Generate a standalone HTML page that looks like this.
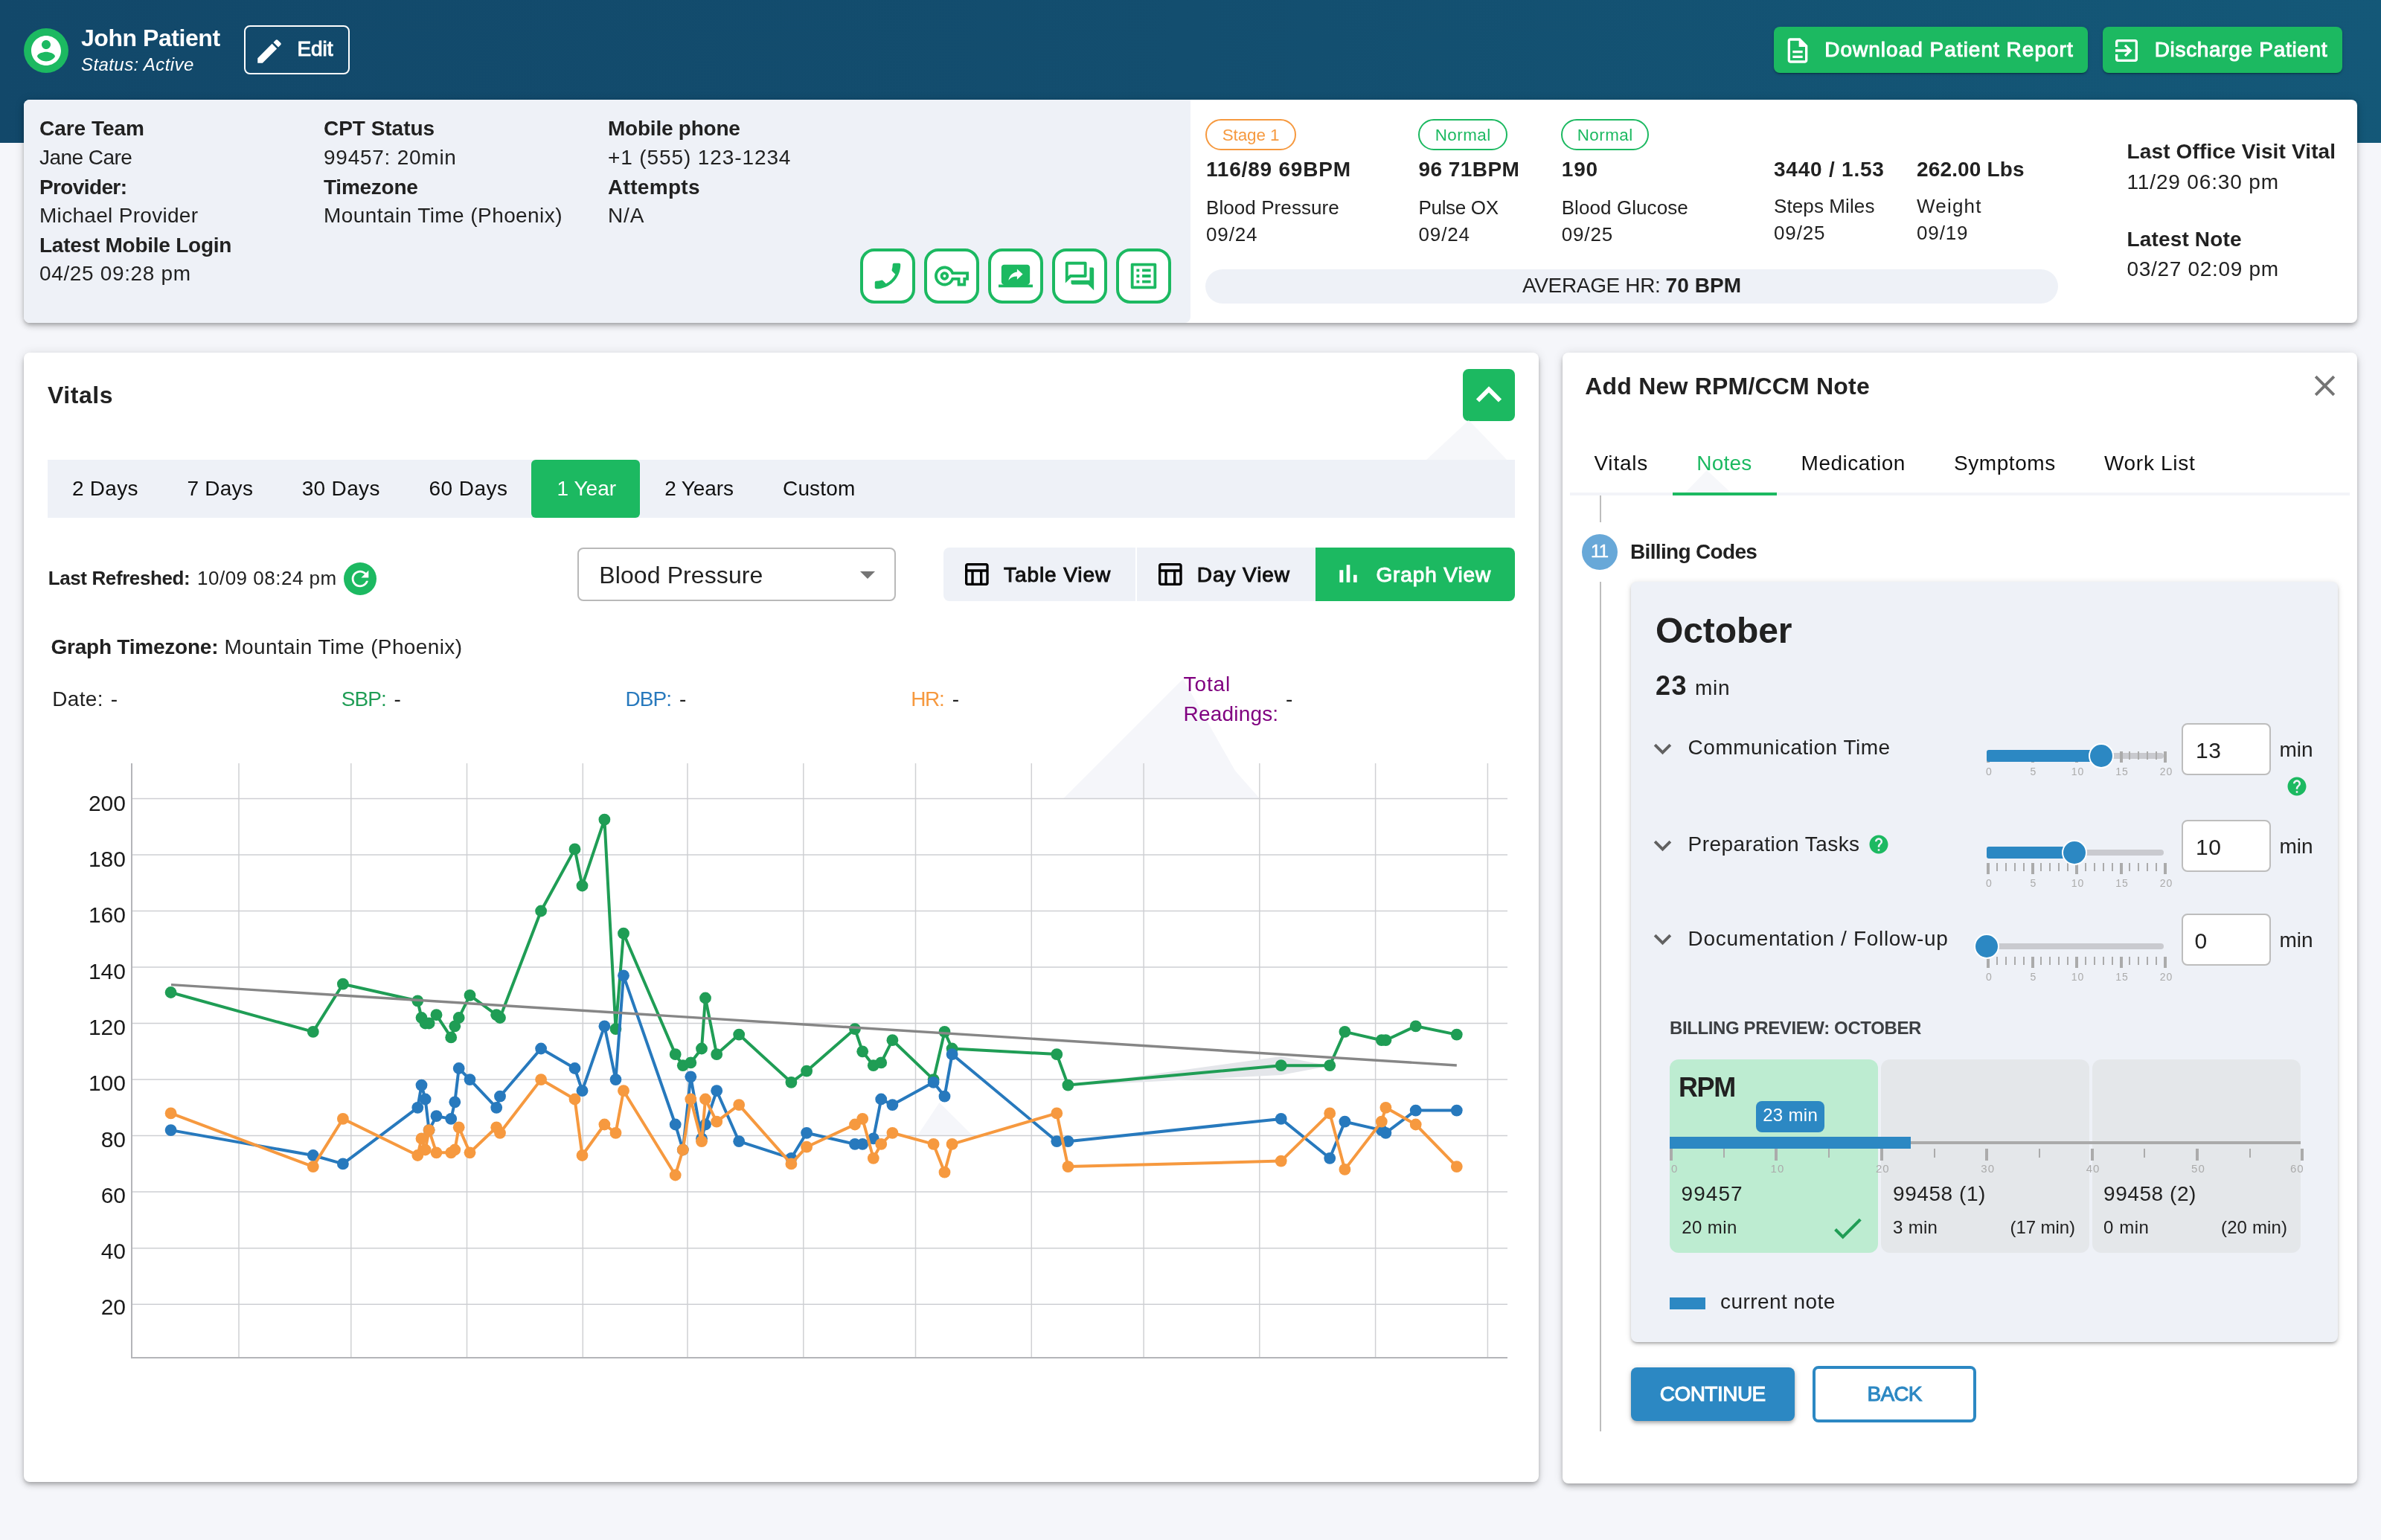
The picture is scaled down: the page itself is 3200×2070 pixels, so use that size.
<!DOCTYPE html>
<html lang="en"><head><meta charset="utf-8"><title>Patient - John Patient</title>
<style>
*{box-sizing:border-box;margin:0;padding:0}
html,body{width:3200px;height:2070px;overflow:hidden}
@media (max-width:1700px){html{zoom:.5}}
body{will-change:transform;background:#f5f6fa;font-family:"Liberation Sans",sans-serif;color:#212121;position:relative}
.t{position:absolute;white-space:nowrap;line-height:1;display:block}
.ic{position:absolute;display:block}
.abs{position:absolute}
.topbar{position:absolute;left:0;top:0;width:3200px;height:192px;background:linear-gradient(90deg,#12486a 0%,#134e6f 50%,#145878 100%)}
.card{position:absolute;background:#fff;border-radius:8px;box-shadow:0 3px 5px -1px rgba(0,0,0,.2),0 5px 8px 0 rgba(0,0,0,.14),0 1px 14px 0 rgba(0,0,0,.12)}
.btn-g{position:absolute;background:#1cb961;border-radius:8px;box-shadow:0 3px 1px -2px rgba(0,0,0,.2),0 2px 2px 0 rgba(0,0,0,.14),0 1px 5px 0 rgba(0,0,0,.12)}
.sq{position:absolute;width:74px;height:74px;border:4px solid #1cb961;border-radius:19px;background:#fff}
.badge{position:absolute;height:42px;border:2px solid;border-radius:21px}

.tabbar{position:absolute;background:#eef1f7}
.seg{position:absolute;top:262px;height:72px;background:#eef1f7}

.inp{position:absolute;width:120px;height:70px;border:2px solid #bdbdbd;border-radius:8px;background:#fff}
.thumb{position:absolute;width:34px;height:34px;border-radius:50%;background:#2c88c3;border:2px solid #fff}
.tk{position:absolute;background:#ababab}
.cpt{position:absolute;top:950px;width:280px;height:260px;border-radius:12px;background:#e4e7ea}
</style></head>
<body>
<header class="topbar">
<div style="position:absolute;left:32.0px;top:38.0px;width:60.0px;height:60.0px;background:#1cb961;border-radius:50%"></div>
<svg class="ic" style="left:38.0px;top:44.0px" width="48" height="48" viewBox="0 0 24 24"><path fill="#fff" d="M12 2C6.48 2 2 6.48 2 12s4.48 10 10 10 10-4.48 10-10S17.52 2 12 2zm0 3c1.66 0 3 1.34 3 3s-1.34 3-3 3-3-1.34-3-3 1.34-3 3-3zm0 14.2c-2.5 0-4.71-1.28-6-3.22.03-1.99 4-3.08 6-3.08 1.99 0 5.97 1.09 6 3.08-1.29 1.94-3.5 3.22-6 3.22z"/></svg>
<h1 class="t" style="left:109.0px;top:35.3px;font-size:32px;letter-spacing:-0.45px;font-weight:700;color:#fff;">John Patient</h1>
<span class="t" style="left:109.0px;top:75.4px;font-size:24px;letter-spacing:0.42px;color:#fff;font-style:italic;">Status: Active</span>
<a style="position:absolute;left:328.0px;top:34.0px;width:142.0px;height:66.0px;border:2px solid #fff;border-radius:8px"></a>
<svg class="ic" style="left:341.0px;top:47.7px" width="42" height="42" viewBox="0 0 24 24"><path fill="#fff" d="M3 17.25V21h3.75L17.81 9.94l-3.75-3.75L3 17.25zM20.71 7.04c.39-.39.39-1.02 0-1.41l-2.34-2.34c-.39-.39-1.02-.39-1.41 0l-1.83 1.83 3.75 3.75 1.83-1.83z"/></svg>
<span class="t" style="left:399.5px;top:52.3px;font-size:28px;letter-spacing:-0.08px;color:#fff;-webkit-text-stroke:1.0px currentColor;">Edit</span>
<div class="btn-g" style="position:absolute;left:2384.0px;top:36.0px;width:422.0px;height:62.0px;"></div>
<svg class="ic" style="left:2396.0px;top:48.0px" width="40" height="40" viewBox="0 0 24 24"><path fill="#fff" d="M8 16h8v2H8zm0-4h8v2H8zm6-10H6c-1.1 0-2 .9-2 2v16c0 1.1.89 2 1.99 2H18c1.1 0 2-.9 2-2V8l-6-6zm4 18H6V4h7v5h5v11z"/></svg>
<span class="t" style="left:2452.2px;top:52.7px;font-size:28px;letter-spacing:1.01px;color:#fff;-webkit-text-stroke:1.0px currentColor;">Download Patient Report</span>
<div class="btn-g" style="position:absolute;left:2826.0px;top:36.0px;width:322.0px;height:62.0px;"></div>
<svg class="ic" style="left:2837.6px;top:48.2px" width="40" height="40" viewBox="0 0 24 24"><path fill="#fff" d="M10.09 15.59L11.5 17l5-5-5-5-1.41 1.41L12.67 11H3v2h9.67l-2.58 2.59zM19 3H5c-1.11 0-2 .9-2 2v4h2V5h14v14H5v-4H3v4c0 1.1.89 2 2 2h14c1.1 0 2-.9 2-2V5c0-1.1-.9-2-2-2z"/></svg>
<span class="t" style="left:2895.7px;top:52.7px;font-size:28px;letter-spacing:0.68px;color:#fff;-webkit-text-stroke:1.0px currentColor;">Discharge Patient</span>
</header>
<section class="card" style="left:32px;top:134px;width:3136px;height:300px">
<div class="abs" style="left:0;top:0;width:1568px;height:300px;background:#eef1f7;border-radius:8px 0 8px 8px"></div>
<span class="t" style="left:21.0px;top:24.6px;font-size:28px;letter-spacing:-0.03px;font-weight:700;">Care Team</span>
<span class="t" style="left:21.0px;top:64.3px;font-size:28px;letter-spacing:-0.53px;">Jane Care</span>
<span class="t" style="left:21.0px;top:104.3px;font-size:28px;letter-spacing:-0.62px;font-weight:700;">Provider:</span>
<span class="t" style="left:21.0px;top:142.0px;font-size:28px;letter-spacing:0.30px;">Michael Provider</span>
<span class="t" style="left:21.0px;top:182.3px;font-size:28px;letter-spacing:-0.25px;font-weight:700;">Latest Mobile Login</span>
<span class="t" style="left:21.0px;top:220.0px;font-size:28px;letter-spacing:0.65px;">04/25 09:28 pm</span>
<span class="t" style="left:403.0px;top:24.6px;font-size:28px;letter-spacing:-0.03px;font-weight:700;">CPT Status</span>
<span class="t" style="left:403.0px;top:64.3px;font-size:28px;letter-spacing:0.75px;">99457: 20min</span>
<span class="t" style="left:403.0px;top:104.3px;font-size:28px;letter-spacing:-0.25px;font-weight:700;">Timezone</span>
<span class="t" style="left:403.0px;top:142.0px;font-size:28px;letter-spacing:0.42px;">Mountain Time (Phoenix)</span>
<span class="t" style="left:785.0px;top:24.6px;font-size:28px;letter-spacing:-0.23px;font-weight:700;">Mobile phone</span>
<span class="t" style="left:785.0px;top:64.3px;font-size:28px;letter-spacing:0.89px;">+1 (555) 123-1234</span>
<span class="t" style="left:785.0px;top:104.3px;font-size:28px;letter-spacing:0.32px;font-weight:700;">Attempts</span>
<span class="t" style="left:785.0px;top:142.0px;font-size:28px;letter-spacing:0.88px;">N/A</span>
<a class="sq" style="left:1124px;top:200px"></a>
<a class="sq" style="left:1210px;top:200px"></a>
<a class="sq" style="left:1296px;top:200px"></a>
<a class="sq" style="left:1382px;top:200px"></a>
<a class="sq" style="left:1468px;top:200px"></a>
<svg class="ic" style="left:1138.0px;top:214.0px" width="46" height="46" viewBox="0 0 24 24"><path fill="#1cb961" d="M6.62 10.79c1.44 2.83 3.76 5.14 6.59 6.59l2.2-2.2c.27-.27.67-.36 1.02-.24 1.12.37 2.33.57 3.57.57.55 0 1 .45 1 1V20c0 .55-.45 1-1 1-9.39 0-17-7.61-17-17 0-.55.45-1 1-1h3.5c.55 0 1 .45 1 1 0 1.25.2 2.45.57 3.57.11.35.03.74-.25 1.02l-2.2 2.2z" transform="translate(24 0) scale(-1 1)"/></svg>
<svg class="ic" style="left:1224.0px;top:214.0px" width="46" height="46" viewBox="0 0 24 24"><path fill="#1cb961" d="M22 19h-6v-4h-2.68c-1.14 2.42-3.6 4-6.32 4-3.86 0-7-3.14-7-7s3.14-7 7-7c2.72 0 5.17 1.58 6.32 4H24v6h-2v4zm-4-2h2v-4h2v-2H11.94l-.23-.67C11.01 8.34 9.11 7 7 7c-2.76 0-5 2.24-5 5s2.24 5 5 5c2.11 0 4.01-1.34 4.71-3.33l.23-.67H18v4zM7 15c-1.65 0-3-1.35-3-3s1.35-3 3-3 3 1.35 3 3-1.35 3-3 3zm0-4c-.55 0-1 .45-1 1s.45 1 1 1 1-.45 1-1-.45-1-1-1z"/></svg>
<svg class="ic" style="left:1310.0px;top:214.0px" width="46" height="46" viewBox="0 0 24 24"><path fill="#1cb961" d="M20 18c1.1 0 1.99-.9 1.99-2L22 6c0-1.11-.9-2-2-2H4c-1.11 0-2 .89-2 2v10c0 1.1.89 2 2 2H0v2h24v-2h-4zm-7-3.53v-2.19c-2.78 0-4.61.85-6 2.72.56-2.67 2.11-5.33 6-5.87V7l4 3.73-4 3.74z"/></svg>
<svg class="ic" style="left:1396.0px;top:214.0px" width="46" height="46" viewBox="0 0 24 24"><path fill="#1cb961" d="M15 4v7H5.17L4 12.17V4h11m1-2H3c-.55 0-1 .45-1 1v14l4-4h10c.55 0 1-.45 1-1V3c0-.55-.45-1-1-1zm5 4h-2v9H6v2c0 .55.45 1 1 1h11l4 4V7c0-.55-.45-1-1-1z"/></svg>
<svg class="ic" style="left:1482.0px;top:214.0px" width="46" height="46" viewBox="0 0 24 24"><path fill="#1cb961" d="M19 5v14H5V5h14m1.1-2H3.9c-.5 0-.9.4-.9.9v16.2c0 .4.4.9.9.9h16.2c.4 0 .9-.5.9-.9V3.9c0-.5-.5-.9-.9-.9zM11 7h6v2h-6V7zm0 4h6v2h-6v-2zm0 4h6v2h-6zM7 7h2v2H7zm0 4h2v2H7zm0 4h2v2H7z"/></svg>
<span class="badge" style="left:1588px;top:26px;width:122px;border-color:#f6993f"></span>
<span class="t" style="left:1610.7px;top:36.5px;font-size:22.4px;letter-spacing:-0.09px;color:#f6993f;">Stage 1</span>
<span class="badge" style="left:1874px;top:26px;width:120px;border-color:#1cb961"></span>
<span class="t" style="left:1896.7px;top:36.5px;font-size:22.4px;letter-spacing:0.48px;color:#1cb961;">Normal</span>
<span class="badge" style="left:2066px;top:26px;width:118px;border-color:#1cb961"></span>
<span class="t" style="left:2087.7px;top:36.5px;font-size:22.4px;letter-spacing:0.48px;color:#1cb961;">Normal</span>
<span class="t" style="left:1589.0px;top:80.3px;font-size:28px;letter-spacing:0.80px;font-weight:700;">116/89 69BPM</span>
<span class="t" style="left:1589.0px;top:132.0px;font-size:26px;letter-spacing:0.08px;">Blood Pressure</span>
<span class="t" style="left:1589.0px;top:168.0px;font-size:26px;letter-spacing:0.88px;">09/24</span>
<span class="t" style="left:1874.5px;top:80.3px;font-size:28px;letter-spacing:0.45px;font-weight:700;">96 71BPM</span>
<span class="t" style="left:1874.5px;top:132.0px;font-size:26px;letter-spacing:-0.32px;">Pulse OX</span>
<span class="t" style="left:1874.5px;top:168.0px;font-size:26px;letter-spacing:0.88px;">09/24</span>
<span class="t" style="left:2066.7px;top:80.3px;font-size:28px;letter-spacing:0.88px;font-weight:700;">190</span>
<span class="t" style="left:2066.7px;top:132.0px;font-size:26px;letter-spacing:0.08px;">Blood Glucose</span>
<span class="t" style="left:2066.7px;top:168.0px;font-size:26px;letter-spacing:0.88px;">09/25</span>
<span class="t" style="left:2352.0px;top:80.3px;font-size:28px;letter-spacing:0.78px;font-weight:700;">3440 / 1.53</span>
<span class="t" style="left:2352.0px;top:129.7px;font-size:26px;letter-spacing:0.10px;">Steps Miles</span>
<span class="t" style="left:2352.0px;top:165.7px;font-size:26px;letter-spacing:0.88px;">09/25</span>
<span class="t" style="left:2544.0px;top:80.3px;font-size:28px;letter-spacing:0.15px;font-weight:700;">262.00 Lbs</span>
<span class="t" style="left:2544.0px;top:129.7px;font-size:26px;letter-spacing:1.20px;">Weight</span>
<span class="t" style="left:2544.0px;top:165.7px;font-size:26px;letter-spacing:0.88px;">09/19</span>
<div style="position:absolute;left:1588.0px;top:228.0px;width:1146.0px;height:46.0px;background:#eef1f7;border-radius:23px"></div>
<span class="t" style="left:2014.0px;top:236.3px;font-size:28px;letter-spacing:-0.34px;">AVERAGE HR:</span>
<span class="t" style="left:2206.5px;top:236.3px;font-size:28px;letter-spacing:0.11px;font-weight:700;">70 BPM</span>
<span class="t" style="left:2826.5px;top:56.3px;font-size:28px;letter-spacing:0.14px;font-weight:700;">Last Office Visit Vital</span>
<span class="t" style="left:2826.5px;top:96.5px;font-size:28px;letter-spacing:0.85px;">11/29 06:30 pm</span>
<span class="t" style="left:2826.5px;top:174.3px;font-size:28px;letter-spacing:0.15px;font-weight:700;">Latest Note</span>
<span class="t" style="left:2826.5px;top:214.3px;font-size:28px;letter-spacing:0.70px;">03/27 02:09 pm</span>
</section>
<section class="card" style="left:32px;top:474px;width:2036px;height:1518px">
<svg class="ic" style="left:0;top:0" width="2036" height="1519" viewBox="32 474 2036 1519" font-family="Liberation Sans, sans-serif">
<path d="M1429.5 1073L1590 912.6L1660 1036L1692.7 1073z" fill="#f5f6fa"/>
<path d="M1232.6 1527L1262.5 1482L1307.8 1527z" fill="#f5f6fa"/>
<path d="M321.0 1026V1825 M471.8 1026V1825 M627.5 1026V1825 M783.3 1026V1825 M924.0 1026V1825 M1079.8 1026V1825 M1230.5 1026V1825 M1386.3 1026V1825 M1537.1 1026V1825 M1692.8 1026V1825 M1848.6 1026V1825 M1999.4 1026V1825" stroke="#d0d1d4" stroke-width="1.5" fill="none"/>
<path d="M177 1753.2H2026 M177 1677.7H2026 M177 1602.1H2026 M177 1526.6H2026 M177 1451.1H2026 M177 1375.5H2026 M177 1300.0H2026 M177 1224.5H2026 M177 1148.9H2026 M177 1073.4H2026" stroke="#cecfd3" stroke-width="1.5" fill="none"/>
<path d="M177 1026V1825H2026" stroke="#b4b5b9" stroke-width="2" fill="none"/>
<text x="169" y="1089.6" font-size="30" text-anchor="end" fill="#1a1a1a">200</text>
<text x="169" y="1164.9" font-size="30" text-anchor="end" fill="#1a1a1a">180</text>
<text x="169" y="1240.2" font-size="30" text-anchor="end" fill="#1a1a1a">160</text>
<text x="169" y="1315.5" font-size="30" text-anchor="end" fill="#1a1a1a">140</text>
<text x="169" y="1390.8" font-size="30" text-anchor="end" fill="#1a1a1a">120</text>
<text x="169" y="1466.2" font-size="30" text-anchor="end" fill="#1a1a1a">100</text>
<text x="169" y="1541.5" font-size="30" text-anchor="end" fill="#1a1a1a">80</text>
<text x="169" y="1616.8" font-size="30" text-anchor="end" fill="#1a1a1a">60</text>
<text x="169" y="1692.1" font-size="30" text-anchor="end" fill="#1a1a1a">40</text>
<text x="169" y="1767.4" font-size="30" text-anchor="end" fill="#1a1a1a">20</text>
<path d="M1435.4 1459.4L1721.7 1420L1787.2 1432.7L1721.7 1445z" fill="#e4e6ea"/>
<g fill="#1f9d55"><path d="M229.6 1334.0 L420.8 1386.9 L460.9 1322.7 L561.3 1345.3 L566.5 1368.0 L571.6 1375.5 L576.6 1375.5 L586.5 1364.2 L606.2 1394.4 L611.3 1379.3 L616.7 1368.0 L631.5 1337.8 L667.2 1364.2 L672.0 1368.0 L727.1 1224.5 L772.5 1141.4 L782.5 1190.5 L812.4 1101.7 L827.5 1383.1 L838.0 1254.7 L907.7 1417.1 L917.8 1432.2 L928.3 1428.4 L943.0 1409.5 L948.0 1341.5 L963.2 1417.1 L993.2 1390.6 L1063.4 1454.8 L1084.1 1439.7 L1149.0 1383.1 L1159.2 1413.3 L1173.8 1432.2 L1184.2 1428.4 L1199.4 1398.2 L1254.6 1451.1 L1269.5 1386.9 L1279.6 1409.5 L1420.3 1417.1 L1435.4 1458.6 L1721.7 1432.2 L1787.2 1432.2 L1807.4 1386.9 L1856.8 1398.2 L1862.4 1398.2 L1902.7 1379.3 L1957.8 1390.6" fill="none" stroke="#1f9d55" stroke-width="4" stroke-linejoin="round"/><circle cx="229.6" cy="1334.0" r="7.9"/><circle cx="420.8" cy="1386.9" r="7.9"/><circle cx="460.9" cy="1322.7" r="7.9"/><circle cx="561.3" cy="1345.3" r="7.9"/><circle cx="566.5" cy="1368.0" r="7.9"/><circle cx="571.6" cy="1375.5" r="7.9"/><circle cx="576.6" cy="1375.5" r="7.9"/><circle cx="586.5" cy="1364.2" r="7.9"/><circle cx="606.2" cy="1394.4" r="7.9"/><circle cx="611.3" cy="1379.3" r="7.9"/><circle cx="616.7" cy="1368.0" r="7.9"/><circle cx="631.5" cy="1337.8" r="7.9"/><circle cx="667.2" cy="1364.2" r="7.9"/><circle cx="672.0" cy="1368.0" r="7.9"/><circle cx="727.1" cy="1224.5" r="7.9"/><circle cx="772.5" cy="1141.4" r="7.9"/><circle cx="782.5" cy="1190.5" r="7.9"/><circle cx="812.4" cy="1101.7" r="7.9"/><circle cx="827.5" cy="1383.1" r="7.9"/><circle cx="838.0" cy="1254.7" r="7.9"/><circle cx="907.7" cy="1417.1" r="7.9"/><circle cx="917.8" cy="1432.2" r="7.9"/><circle cx="928.3" cy="1428.4" r="7.9"/><circle cx="943.0" cy="1409.5" r="7.9"/><circle cx="948.0" cy="1341.5" r="7.9"/><circle cx="963.2" cy="1417.1" r="7.9"/><circle cx="993.2" cy="1390.6" r="7.9"/><circle cx="1063.4" cy="1454.8" r="7.9"/><circle cx="1084.1" cy="1439.7" r="7.9"/><circle cx="1149.0" cy="1383.1" r="7.9"/><circle cx="1159.2" cy="1413.3" r="7.9"/><circle cx="1173.8" cy="1432.2" r="7.9"/><circle cx="1184.2" cy="1428.4" r="7.9"/><circle cx="1199.4" cy="1398.2" r="7.9"/><circle cx="1254.6" cy="1451.1" r="7.9"/><circle cx="1269.5" cy="1386.9" r="7.9"/><circle cx="1279.6" cy="1409.5" r="7.9"/><circle cx="1420.3" cy="1417.1" r="7.9"/><circle cx="1435.4" cy="1458.6" r="7.9"/><circle cx="1721.7" cy="1432.2" r="7.9"/><circle cx="1787.2" cy="1432.2" r="7.9"/><circle cx="1807.4" cy="1386.9" r="7.9"/><circle cx="1856.8" cy="1398.2" r="7.9"/><circle cx="1862.4" cy="1398.2" r="7.9"/><circle cx="1902.7" cy="1379.3" r="7.9"/><circle cx="1957.8" cy="1390.6" r="7.9"/></g>
<g fill="#2779bd"><path d="M229.6 1519.1 L420.8 1553.0 L460.9 1564.4 L561.3 1488.8 L566.5 1458.6 L571.6 1477.5 L576.6 1519.1 L586.5 1500.2 L606.2 1503.9 L611.3 1481.3 L616.7 1436.0 L631.5 1451.1 L667.2 1488.8 L672.0 1473.7 L727.1 1409.5 L772.5 1436.0 L782.5 1466.2 L812.4 1379.3 L827.5 1451.1 L838.0 1311.3 L907.7 1511.5 L917.8 1545.5 L928.3 1447.3 L943.0 1530.4 L948.0 1511.5 L963.2 1466.2 L993.2 1534.2 L1063.4 1556.8 L1084.1 1522.8 L1149.0 1537.9 L1159.2 1537.9 L1173.8 1530.4 L1184.2 1477.5 L1199.4 1485.1 L1254.6 1454.8 L1269.5 1473.7 L1279.6 1417.1 L1420.3 1534.2 L1435.4 1534.2 L1721.7 1503.9 L1787.2 1556.8 L1807.4 1507.7 L1856.8 1519.1 L1862.4 1522.8 L1902.7 1492.6 L1957.8 1492.6" fill="none" stroke="#2779bd" stroke-width="4" stroke-linejoin="round"/><circle cx="229.6" cy="1519.1" r="7.9"/><circle cx="420.8" cy="1553.0" r="7.9"/><circle cx="460.9" cy="1564.4" r="7.9"/><circle cx="561.3" cy="1488.8" r="7.9"/><circle cx="566.5" cy="1458.6" r="7.9"/><circle cx="571.6" cy="1477.5" r="7.9"/><circle cx="576.6" cy="1519.1" r="7.9"/><circle cx="586.5" cy="1500.2" r="7.9"/><circle cx="606.2" cy="1503.9" r="7.9"/><circle cx="611.3" cy="1481.3" r="7.9"/><circle cx="616.7" cy="1436.0" r="7.9"/><circle cx="631.5" cy="1451.1" r="7.9"/><circle cx="667.2" cy="1488.8" r="7.9"/><circle cx="672.0" cy="1473.7" r="7.9"/><circle cx="727.1" cy="1409.5" r="7.9"/><circle cx="772.5" cy="1436.0" r="7.9"/><circle cx="782.5" cy="1466.2" r="7.9"/><circle cx="812.4" cy="1379.3" r="7.9"/><circle cx="827.5" cy="1451.1" r="7.9"/><circle cx="838.0" cy="1311.3" r="7.9"/><circle cx="907.7" cy="1511.5" r="7.9"/><circle cx="917.8" cy="1545.5" r="7.9"/><circle cx="928.3" cy="1447.3" r="7.9"/><circle cx="943.0" cy="1530.4" r="7.9"/><circle cx="948.0" cy="1511.5" r="7.9"/><circle cx="963.2" cy="1466.2" r="7.9"/><circle cx="993.2" cy="1534.2" r="7.9"/><circle cx="1063.4" cy="1556.8" r="7.9"/><circle cx="1084.1" cy="1522.8" r="7.9"/><circle cx="1149.0" cy="1537.9" r="7.9"/><circle cx="1159.2" cy="1537.9" r="7.9"/><circle cx="1173.8" cy="1530.4" r="7.9"/><circle cx="1184.2" cy="1477.5" r="7.9"/><circle cx="1199.4" cy="1485.1" r="7.9"/><circle cx="1254.6" cy="1454.8" r="7.9"/><circle cx="1269.5" cy="1473.7" r="7.9"/><circle cx="1279.6" cy="1417.1" r="7.9"/><circle cx="1420.3" cy="1534.2" r="7.9"/><circle cx="1435.4" cy="1534.2" r="7.9"/><circle cx="1721.7" cy="1503.9" r="7.9"/><circle cx="1787.2" cy="1556.8" r="7.9"/><circle cx="1807.4" cy="1507.7" r="7.9"/><circle cx="1856.8" cy="1519.1" r="7.9"/><circle cx="1862.4" cy="1522.8" r="7.9"/><circle cx="1902.7" cy="1492.6" r="7.9"/><circle cx="1957.8" cy="1492.6" r="7.9"/></g>
<g fill="#f6993f"><path d="M229.6 1496.4 L420.8 1568.1 L460.9 1503.9 L561.3 1553.0 L566.5 1530.4 L571.6 1545.5 L576.6 1519.1 L586.5 1549.3 L606.2 1549.3 L611.3 1545.5 L616.7 1515.3 L631.5 1549.3 L667.2 1515.3 L672.0 1522.8 L727.1 1451.1 L772.5 1477.5 L782.5 1553.0 L812.4 1511.5 L827.5 1522.8 L838.0 1466.2 L907.7 1579.5 L917.8 1545.5 L928.3 1477.5 L943.0 1534.2 L948.0 1477.5 L963.2 1507.7 L993.2 1485.1 L1063.4 1564.4 L1084.1 1541.7 L1149.0 1511.5 L1159.2 1503.9 L1173.8 1556.8 L1184.2 1537.9 L1199.4 1522.8 L1254.6 1537.9 L1269.5 1575.7 L1279.6 1537.9 L1420.3 1496.4 L1435.4 1568.1 L1721.7 1560.6 L1787.2 1496.4 L1807.4 1571.9 L1856.8 1507.7 L1862.4 1488.8 L1902.7 1511.5 L1957.8 1568.1" fill="none" stroke="#f6993f" stroke-width="4" stroke-linejoin="round"/><circle cx="229.6" cy="1496.4" r="7.9"/><circle cx="420.8" cy="1568.1" r="7.9"/><circle cx="460.9" cy="1503.9" r="7.9"/><circle cx="561.3" cy="1553.0" r="7.9"/><circle cx="566.5" cy="1530.4" r="7.9"/><circle cx="571.6" cy="1545.5" r="7.9"/><circle cx="576.6" cy="1519.1" r="7.9"/><circle cx="586.5" cy="1549.3" r="7.9"/><circle cx="606.2" cy="1549.3" r="7.9"/><circle cx="611.3" cy="1545.5" r="7.9"/><circle cx="616.7" cy="1515.3" r="7.9"/><circle cx="631.5" cy="1549.3" r="7.9"/><circle cx="667.2" cy="1515.3" r="7.9"/><circle cx="672.0" cy="1522.8" r="7.9"/><circle cx="727.1" cy="1451.1" r="7.9"/><circle cx="772.5" cy="1477.5" r="7.9"/><circle cx="782.5" cy="1553.0" r="7.9"/><circle cx="812.4" cy="1511.5" r="7.9"/><circle cx="827.5" cy="1522.8" r="7.9"/><circle cx="838.0" cy="1466.2" r="7.9"/><circle cx="907.7" cy="1579.5" r="7.9"/><circle cx="917.8" cy="1545.5" r="7.9"/><circle cx="928.3" cy="1477.5" r="7.9"/><circle cx="943.0" cy="1534.2" r="7.9"/><circle cx="948.0" cy="1477.5" r="7.9"/><circle cx="963.2" cy="1507.7" r="7.9"/><circle cx="993.2" cy="1485.1" r="7.9"/><circle cx="1063.4" cy="1564.4" r="7.9"/><circle cx="1084.1" cy="1541.7" r="7.9"/><circle cx="1149.0" cy="1511.5" r="7.9"/><circle cx="1159.2" cy="1503.9" r="7.9"/><circle cx="1173.8" cy="1556.8" r="7.9"/><circle cx="1184.2" cy="1537.9" r="7.9"/><circle cx="1199.4" cy="1522.8" r="7.9"/><circle cx="1254.6" cy="1537.9" r="7.9"/><circle cx="1269.5" cy="1575.7" r="7.9"/><circle cx="1279.6" cy="1537.9" r="7.9"/><circle cx="1420.3" cy="1496.4" r="7.9"/><circle cx="1435.4" cy="1568.1" r="7.9"/><circle cx="1721.7" cy="1560.6" r="7.9"/><circle cx="1787.2" cy="1496.4" r="7.9"/><circle cx="1807.4" cy="1571.9" r="7.9"/><circle cx="1856.8" cy="1507.7" r="7.9"/><circle cx="1862.4" cy="1488.8" r="7.9"/><circle cx="1902.7" cy="1511.5" r="7.9"/><circle cx="1957.8" cy="1568.1" r="7.9"/></g>
<path d="M230 1323.6L1957.8 1432" stroke="#868686" stroke-width="3.4" fill="none"/>
</svg>
<h2 class="t" style="left:32.1px;top:41.2px;font-size:32px;letter-spacing:0.51px;font-weight:700;">Vitals</h2>
<div style="position:absolute;left:1934.0px;top:22.0px;width:70.0px;height:70.0px;background:#1cb961;border-radius:8px"></div>
<svg class="ic" style="left:1934.0px;top:22.0px" width="70" height="70" viewBox="0 0 70 70"><path d="M20 42.5 L35 27.5 L50 42.5" fill="none" stroke="#fff" stroke-width="6"/></svg>
<svg class="ic" style="left:1884.0px;top:91.0px" width="120" height="54" viewBox="0 0 120 54"><path d="M0 54 L58 0 L110 54z" fill="#f6f7fa"/></svg>
<div class="tabbar" style="position:absolute;left:32.0px;top:144.0px;width:1972.0px;height:78.0px;"></div>
<div style="position:absolute;left:682.0px;top:144.0px;width:146.0px;height:78.0px;background:#1cb961;border-radius:6px"></div>
<span class="t" style="left:65.0px;top:169.0px;font-size:28px;letter-spacing:0.25px;color:#111;">2 Days</span>
<span class="t" style="left:219.4px;top:169.0px;font-size:28px;letter-spacing:0.27px;color:#111;">7 Days</span>
<span class="t" style="left:373.7px;top:169.0px;font-size:28px;letter-spacing:0.33px;color:#111;">30 Days</span>
<span class="t" style="left:544.5px;top:169.0px;font-size:28px;letter-spacing:0.46px;color:#111;">60 Days</span>
<span class="t" style="left:716.5px;top:169.0px;font-size:28px;letter-spacing:0.04px;color:#fff;">1 Year</span>
<span class="t" style="left:861.2px;top:169.0px;font-size:28px;letter-spacing:-0.10px;color:#111;">2 Years</span>
<span class="t" style="left:1020.0px;top:169.0px;font-size:28px;letter-spacing:0.16px;color:#111;">Custom</span>
<span class="t" style="left:32.7px;top:289.8px;font-size:26px;letter-spacing:-0.39px;font-weight:700;">Last Refreshed:</span>
<span class="t" style="left:233.0px;top:289.8px;font-size:26px;letter-spacing:0.50px;">10/09 08:24 pm</span>
<div style="position:absolute;left:430.0px;top:282.0px;width:44.0px;height:44.0px;background:#1cb961;border-radius:50%"></div>
<svg class="ic" style="left:435.0px;top:287.0px" width="34" height="34" viewBox="0 0 24 24"><path fill="#fff" d="M17.65 6.35C16.2 4.9 14.21 4 12 4c-4.42 0-7.99 3.58-7.99 8s3.57 8 7.99 8c3.73 0 6.84-2.55 7.73-6h-2.08c-.82 2.33-3.04 4-5.65 4-3.31 0-6-2.69-6-6s2.69-6 6-6c1.66 0 3.14.69 4.22 1.78L13 11h7V4l-2.35 2.35z"/></svg>
<div style="position:absolute;left:744.0px;top:262.0px;width:428.0px;height:72.0px;border:2px solid #b9b9b9;border-radius:8px;background:#fff"></div>
<span class="t" style="left:773.3px;top:283.2px;font-size:32px;letter-spacing:0.10px;">Blood Pressure</span>
<svg class="ic" style="left:1109.7px;top:274.0px" width="48" height="48" viewBox="0 0 24 24"><path fill="#757575" d="M7 10l5 5 5-5z"/></svg>
<div style="position:absolute;left:1236.0px;top:262.0px;width:258.0px;height:72.0px;background:#eef1f7;border-radius:8px 0 0 8px"></div>
<div style="position:absolute;left:1496.0px;top:262.0px;width:240.0px;height:72.0px;background:#eef1f7"></div>
<div style="position:absolute;left:1736.0px;top:262.0px;width:268.0px;height:72.0px;background:#1cb961;border-radius:0 8px 8px 0"></div>
<svg class="ic" style="left:1260.0px;top:278.0px" width="40" height="40" viewBox="0 0 24 24"><path fill="#000" d="M20 3H5c-1.1 0-2 .9-2 2v14c0 1.1.9 2 2 2h15c1.1 0 2-.9 2-2V5c0-1.1-.9-2-2-2zm0 2v3H5V5h15zm-5 14h-5v-9h5v9zM5 10h3v9H5v-9zm12 9v-9h3v9h-3z"/></svg>
<span class="t" style="left:1317.1px;top:284.6px;font-size:28px;letter-spacing:0.91px;color:#111;-webkit-text-stroke:1.0px currentColor;">Table View</span>
<svg class="ic" style="left:1519.8px;top:278.0px" width="40" height="40" viewBox="0 0 24 24"><path fill="#000" d="M20 3H5c-1.1 0-2 .9-2 2v14c0 1.1.9 2 2 2h15c1.1 0 2-.9 2-2V5c0-1.1-.9-2-2-2zm0 2v3H5V5h15zm-5 14h-5v-9h5v9zM5 10h3v9H5v-9zm12 9v-9h3v9h-3z"/></svg>
<span class="t" style="left:1576.8px;top:284.6px;font-size:28px;letter-spacing:0.93px;color:#111;-webkit-text-stroke:1.0px currentColor;">Day View</span>
<svg class="ic" style="left:1759.7px;top:276.7px" width="40" height="40" viewBox="0 0 24 24"><path fill="#fff" d="M5 9.2h3V19H5zM10.6 5h2.8v14h-2.8zm5.6 8H19v6h-2.8z"/></svg>
<span class="t" style="left:1817.4px;top:284.6px;font-size:28px;letter-spacing:0.89px;color:#fff;-webkit-text-stroke:1.0px currentColor;">Graph View</span>
<span class="t" style="left:36.5px;top:382.1px;font-size:28px;letter-spacing:-0.23px;font-weight:700;">Graph Timezone:</span>
<span class="t" style="left:269.4px;top:382.1px;font-size:28px;letter-spacing:0.38px;">Mountain Time (Phoenix)</span>
<span class="t" style="left:38.2px;top:452.3px;font-size:28px;letter-spacing:0.35px;">Date:</span>
<span class="t" style="left:116.8px;top:452.3px;font-size:28px;">-</span>
<span class="t" style="left:426.8px;top:452.3px;font-size:28px;letter-spacing:-0.92px;color:#1f9d55;">SBP:</span>
<span class="t" style="left:497.5px;top:452.3px;font-size:28px;">-</span>
<span class="t" style="left:808.5px;top:452.3px;font-size:28px;letter-spacing:-0.98px;color:#2779bd;">DBP:</span>
<span class="t" style="left:881.0px;top:452.3px;font-size:28px;">-</span>
<span class="t" style="left:1192.2px;top:452.3px;font-size:28px;letter-spacing:-1.32px;color:#f6993f;">HR:</span>
<span class="t" style="left:1247.8px;top:452.3px;font-size:28px;">-</span>
<span class="t" style="left:1558.6px;top:432.3px;font-size:28px;letter-spacing:0.86px;color:#800080;">Total</span>
<span class="t" style="left:1558.6px;top:472.3px;font-size:28px;letter-spacing:0.18px;color:#800080;">Readings:</span>
<span class="t" style="left:1696.0px;top:452.3px;font-size:28px;">-</span>
</section>
<section class="card" style="left:2100px;top:474px;width:1068px;height:1520px">
<h2 class="t" style="left:30.3px;top:29.3px;font-size:32px;letter-spacing:0.20px;font-weight:700;">Add New RPM/CCM Note</h2>
<svg class="ic" style="left:1000.7px;top:20.6px" width="47" height="47" viewBox="0 0 24 24"><path fill="#757575" d="M19 6.41L17.59 5 12 10.59 6.41 5 5 6.41 10.59 12 5 17.59 6.41 19 12 13.41 17.59 19 19 17.59 13.41 12z"/></svg>
<svg class="ic" style="left:165.0px;top:158.0px" width="62" height="30" viewBox="0 0 62 30"><path d="M0 30L29 0L61 30z" fill="#f6f7fa"/></svg>
<div style="position:absolute;left:10.0px;top:188.0px;width:1048.0px;height:4.0px;background:#f3f4f8"></div>
<div style="position:absolute;left:148.0px;top:188.0px;width:140.0px;height:4.0px;background:#1cb961"></div>
<span class="t" style="left:42.4px;top:135.2px;font-size:28px;letter-spacing:0.80px;color:#111;">Vitals</span>
<span class="t" style="left:180.3px;top:135.2px;font-size:28px;letter-spacing:0.19px;color:#1cb961;">Notes</span>
<span class="t" style="left:320.6px;top:135.2px;font-size:28px;letter-spacing:0.48px;color:#111;">Medication</span>
<span class="t" style="left:525.9px;top:135.2px;font-size:28px;letter-spacing:0.58px;color:#111;">Symptoms</span>
<span class="t" style="left:728.0px;top:135.2px;font-size:28px;letter-spacing:0.69px;color:#111;">Work List</span>
<div style="position:absolute;left:50.0px;top:192.0px;width:2.0px;height:36.0px;background:#bdbdbd"></div>
<div style="position:absolute;left:50.0px;top:308.0px;width:2.0px;height:1142.0px;background:#bdbdbd"></div>
<div style="position:absolute;left:26.0px;top:244.0px;width:48.0px;height:48.0px;background:#68a8d8;border-radius:50%"></div>
<span class="t" style="left:37.9px;top:255.2px;font-size:24px;letter-spacing:-0.80px;color:#fff;-webkit-text-stroke:0.4px currentColor;">11</span>
<h3 class="t" style="left:91.0px;top:254.0px;font-size:28px;letter-spacing:-0.67px;font-weight:700;">Billing Codes</h3>
<div style="position:absolute;left:92.0px;top:308.0px;width:950.0px;height:1022.0px;background:#eef1f7;border-radius:8px;box-shadow:0 3px 3px -2px rgba(0,0,0,.2),0 3px 4px 0 rgba(0,0,0,.14),0 1px 8px 0 rgba(0,0,0,.12)"></div>
<span class="t" style="left:125.0px;top:349.7px;font-size:48px;letter-spacing:-0.08px;font-weight:700;">October</span>
<span class="t" style="left:125.0px;top:429.5px;font-size:36px;letter-spacing:1.50px;font-weight:700;">23</span>
<span class="t" style="left:178.0px;top:436.6px;font-size:28px;letter-spacing:0.75px;">min</span>
<svg class="ic" style="left:110.6px;top:508.7px" width="47" height="47" viewBox="0 0 24 24"><path fill="#616161" d="M16.59 8.59L12 13.17 7.41 8.59 6 10l6 6 6-6z"/></svg>
<span class="t" style="left:168.6px;top:517.2px;font-size:28px;letter-spacing:0.50px;">Communication Time</span>
<svg class="ic" style="left:110.6px;top:638.6px" width="47" height="47" viewBox="0 0 24 24"><path fill="#616161" d="M16.59 8.59L12 13.17 7.41 8.59 6 10l6 6 6-6z"/></svg>
<span class="t" style="left:168.6px;top:647.0px;font-size:28px;letter-spacing:0.43px;">Preparation Tasks</span>
<svg class="ic" style="left:410.0px;top:645.6px" width="30" height="30" viewBox="0 0 24 24"><path fill="#1cb961" d="M12 2C6.48 2 2 6.48 2 12s4.48 10 10 10 10-4.48 10-10S17.52 2 12 2zm1 17h-2v-2h2v2zm2.07-7.75l-.9.92C13.45 12.9 13 13.5 13 15h-2v-.5c0-1.1.45-2.1 1.17-2.83l1.24-1.26c.37-.36.59-.86.59-1.41 0-1.1-.9-2-2-2s-2 .9-2 2H8c0-2.21 1.79-4 4-4s4 1.79 4 4c0 .88-.36 1.68-.93 2.25z"/></svg>
<svg class="ic" style="left:110.6px;top:765.2px" width="47" height="47" viewBox="0 0 24 24"><path fill="#616161" d="M16.59 8.59L12 13.17 7.41 8.59 6 10l6 6 6-6z"/></svg>
<span class="t" style="left:168.6px;top:773.7px;font-size:28px;letter-spacing:0.67px;">Documentation / Follow-up</span>
<div style="position:absolute;left:570.0px;top:538.0px;width:238.0px;height:8.0px;background:#c9cacf;border-radius:4px"></div>
<div class="tk" style="position:absolute;left:570.0px;top:536.0px;width:4.0px;height:15.0px;"></div>
<div class="tk" style="position:absolute;left:582.9px;top:536.0px;width:2.0px;height:11.0px;"></div>
<div class="tk" style="position:absolute;left:594.8px;top:536.0px;width:2.0px;height:11.0px;"></div>
<div class="tk" style="position:absolute;left:606.7px;top:536.0px;width:2.0px;height:11.0px;"></div>
<div class="tk" style="position:absolute;left:618.6px;top:536.0px;width:2.0px;height:11.0px;"></div>
<div class="tk" style="position:absolute;left:629.5px;top:536.0px;width:4.0px;height:15.0px;"></div>
<div class="tk" style="position:absolute;left:642.4px;top:536.0px;width:2.0px;height:11.0px;"></div>
<div class="tk" style="position:absolute;left:654.3px;top:536.0px;width:2.0px;height:11.0px;"></div>
<div class="tk" style="position:absolute;left:666.2px;top:536.0px;width:2.0px;height:11.0px;"></div>
<div class="tk" style="position:absolute;left:678.1px;top:536.0px;width:2.0px;height:11.0px;"></div>
<div class="tk" style="position:absolute;left:689.0px;top:536.0px;width:4.0px;height:15.0px;"></div>
<div class="tk" style="position:absolute;left:701.9px;top:536.0px;width:2.0px;height:11.0px;"></div>
<div class="tk" style="position:absolute;left:713.8px;top:536.0px;width:2.0px;height:11.0px;"></div>
<div class="tk" style="position:absolute;left:725.7px;top:536.0px;width:2.0px;height:11.0px;"></div>
<div class="tk" style="position:absolute;left:737.6px;top:536.0px;width:2.0px;height:11.0px;"></div>
<div class="tk" style="position:absolute;left:748.5px;top:536.0px;width:4.0px;height:15.0px;"></div>
<div class="tk" style="position:absolute;left:761.4px;top:536.0px;width:2.0px;height:11.0px;"></div>
<div class="tk" style="position:absolute;left:773.3px;top:536.0px;width:2.0px;height:11.0px;"></div>
<div class="tk" style="position:absolute;left:785.2px;top:536.0px;width:2.0px;height:11.0px;"></div>
<div class="tk" style="position:absolute;left:797.1px;top:536.0px;width:2.0px;height:11.0px;"></div>
<div class="tk" style="position:absolute;left:808.0px;top:536.0px;width:4.0px;height:15.0px;"></div>
<div style="position:absolute;left:570.0px;top:534.0px;width:154.3px;height:16.0px;background:#2c88c3;border-radius:3px"></div>
<span class="t" style="left:569.1px;top:555.9px;font-size:14px;color:#ababab;">0</span>
<span class="t" style="left:628.6px;top:555.9px;font-size:14px;color:#ababab;">5</span>
<span class="t" style="left:683.7px;top:555.9px;font-size:14px;letter-spacing:1.10px;color:#ababab;">10</span>
<span class="t" style="left:743.2px;top:555.9px;font-size:14px;letter-spacing:1.10px;color:#ababab;">15</span>
<span class="t" style="left:802.7px;top:555.9px;font-size:14px;letter-spacing:1.10px;color:#ababab;">20</span>
<span class="thumb" style="left:707.3px;top:525.0px"></span>
<div style="position:absolute;left:570.0px;top:668.0px;width:238.0px;height:8.0px;background:#c9cacf;border-radius:4px"></div>
<div style="position:absolute;left:570.0px;top:664.0px;width:118.0px;height:16.0px;background:#2c88c3;border-radius:3px"></div>
<div class="tk" style="position:absolute;left:570.0px;top:686.0px;width:4.0px;height:15.0px;"></div>
<div class="tk" style="position:absolute;left:582.9px;top:686.0px;width:2.0px;height:11.0px;"></div>
<div class="tk" style="position:absolute;left:594.8px;top:686.0px;width:2.0px;height:11.0px;"></div>
<div class="tk" style="position:absolute;left:606.7px;top:686.0px;width:2.0px;height:11.0px;"></div>
<div class="tk" style="position:absolute;left:618.6px;top:686.0px;width:2.0px;height:11.0px;"></div>
<div class="tk" style="position:absolute;left:629.5px;top:686.0px;width:4.0px;height:15.0px;"></div>
<div class="tk" style="position:absolute;left:642.4px;top:686.0px;width:2.0px;height:11.0px;"></div>
<div class="tk" style="position:absolute;left:654.3px;top:686.0px;width:2.0px;height:11.0px;"></div>
<div class="tk" style="position:absolute;left:666.2px;top:686.0px;width:2.0px;height:11.0px;"></div>
<div class="tk" style="position:absolute;left:678.1px;top:686.0px;width:2.0px;height:11.0px;"></div>
<div class="tk" style="position:absolute;left:689.0px;top:686.0px;width:4.0px;height:15.0px;"></div>
<div class="tk" style="position:absolute;left:701.9px;top:686.0px;width:2.0px;height:11.0px;"></div>
<div class="tk" style="position:absolute;left:713.8px;top:686.0px;width:2.0px;height:11.0px;"></div>
<div class="tk" style="position:absolute;left:725.7px;top:686.0px;width:2.0px;height:11.0px;"></div>
<div class="tk" style="position:absolute;left:737.6px;top:686.0px;width:2.0px;height:11.0px;"></div>
<div class="tk" style="position:absolute;left:748.5px;top:686.0px;width:4.0px;height:15.0px;"></div>
<div class="tk" style="position:absolute;left:761.4px;top:686.0px;width:2.0px;height:11.0px;"></div>
<div class="tk" style="position:absolute;left:773.3px;top:686.0px;width:2.0px;height:11.0px;"></div>
<div class="tk" style="position:absolute;left:785.2px;top:686.0px;width:2.0px;height:11.0px;"></div>
<div class="tk" style="position:absolute;left:797.1px;top:686.0px;width:2.0px;height:11.0px;"></div>
<div class="tk" style="position:absolute;left:808.0px;top:686.0px;width:4.0px;height:15.0px;"></div>
<span class="t" style="left:569.1px;top:706.0px;font-size:14px;color:#ababab;">0</span>
<span class="t" style="left:628.6px;top:706.0px;font-size:14px;color:#ababab;">5</span>
<span class="t" style="left:683.7px;top:706.0px;font-size:14px;letter-spacing:1.10px;color:#ababab;">10</span>
<span class="t" style="left:743.2px;top:706.0px;font-size:14px;letter-spacing:1.10px;color:#ababab;">15</span>
<span class="t" style="left:802.7px;top:706.0px;font-size:14px;letter-spacing:1.10px;color:#ababab;">20</span>
<span class="thumb" style="left:671.0px;top:655.0px"></span>
<div style="position:absolute;left:570.0px;top:794.0px;width:238.0px;height:8.0px;background:#c9cacf;border-radius:4px"></div>
<div class="tk" style="position:absolute;left:570.0px;top:812.0px;width:4.0px;height:15.0px;"></div>
<div class="tk" style="position:absolute;left:582.9px;top:812.0px;width:2.0px;height:11.0px;"></div>
<div class="tk" style="position:absolute;left:594.8px;top:812.0px;width:2.0px;height:11.0px;"></div>
<div class="tk" style="position:absolute;left:606.7px;top:812.0px;width:2.0px;height:11.0px;"></div>
<div class="tk" style="position:absolute;left:618.6px;top:812.0px;width:2.0px;height:11.0px;"></div>
<div class="tk" style="position:absolute;left:629.5px;top:812.0px;width:4.0px;height:15.0px;"></div>
<div class="tk" style="position:absolute;left:642.4px;top:812.0px;width:2.0px;height:11.0px;"></div>
<div class="tk" style="position:absolute;left:654.3px;top:812.0px;width:2.0px;height:11.0px;"></div>
<div class="tk" style="position:absolute;left:666.2px;top:812.0px;width:2.0px;height:11.0px;"></div>
<div class="tk" style="position:absolute;left:678.1px;top:812.0px;width:2.0px;height:11.0px;"></div>
<div class="tk" style="position:absolute;left:689.0px;top:812.0px;width:4.0px;height:15.0px;"></div>
<div class="tk" style="position:absolute;left:701.9px;top:812.0px;width:2.0px;height:11.0px;"></div>
<div class="tk" style="position:absolute;left:713.8px;top:812.0px;width:2.0px;height:11.0px;"></div>
<div class="tk" style="position:absolute;left:725.7px;top:812.0px;width:2.0px;height:11.0px;"></div>
<div class="tk" style="position:absolute;left:737.6px;top:812.0px;width:2.0px;height:11.0px;"></div>
<div class="tk" style="position:absolute;left:748.5px;top:812.0px;width:4.0px;height:15.0px;"></div>
<div class="tk" style="position:absolute;left:761.4px;top:812.0px;width:2.0px;height:11.0px;"></div>
<div class="tk" style="position:absolute;left:773.3px;top:812.0px;width:2.0px;height:11.0px;"></div>
<div class="tk" style="position:absolute;left:785.2px;top:812.0px;width:2.0px;height:11.0px;"></div>
<div class="tk" style="position:absolute;left:797.1px;top:812.0px;width:2.0px;height:11.0px;"></div>
<div class="tk" style="position:absolute;left:808.0px;top:812.0px;width:4.0px;height:15.0px;"></div>
<span class="t" style="left:569.1px;top:831.6px;font-size:14px;color:#ababab;">0</span>
<span class="t" style="left:628.6px;top:831.6px;font-size:14px;color:#ababab;">5</span>
<span class="t" style="left:683.7px;top:831.6px;font-size:14px;letter-spacing:1.10px;color:#ababab;">10</span>
<span class="t" style="left:743.2px;top:831.6px;font-size:14px;letter-spacing:1.10px;color:#ababab;">15</span>
<span class="t" style="left:802.7px;top:831.6px;font-size:14px;letter-spacing:1.10px;color:#ababab;">20</span>
<span class="thumb" style="left:553.0px;top:781.0px"></span>
<span class="inp" style="left:832px;top:498px"></span>
<span class="t" style="left:851.0px;top:519.8px;font-size:30px;letter-spacing:0.55px;">13</span>
<span class="inp" style="left:832px;top:628px"></span>
<span class="t" style="left:851.0px;top:649.8px;font-size:30px;letter-spacing:0.55px;">10</span>
<span class="inp" style="left:832px;top:754px"></span>
<span class="t" style="left:849.4px;top:775.8px;font-size:30px;">0</span>
<span class="t" style="left:963.4px;top:519.6px;font-size:28px;">min</span>
<span class="t" style="left:963.4px;top:649.6px;font-size:28px;">min</span>
<span class="t" style="left:963.4px;top:775.6px;font-size:28px;">min</span>
<svg class="ic" style="left:972.0px;top:568.0px" width="30" height="30" viewBox="0 0 24 24"><path fill="#1cb961" d="M12 2C6.48 2 2 6.48 2 12s4.48 10 10 10 10-4.48 10-10S17.52 2 12 2zm1 17h-2v-2h2v2zm2.07-7.75l-.9.92C13.45 12.9 13 13.5 13 15h-2v-.5c0-1.1.45-2.1 1.17-2.83l1.24-1.26c.37-.36.59-.86.59-1.41 0-1.1-.9-2-2-2s-2 .9-2 2H8c0-2.21 1.79-4 4-4s4 1.79 4 4c0 .88-.36 1.68-.93 2.25z"/></svg>
<h4 class="t" style="left:144.0px;top:895.7px;font-size:24px;letter-spacing:-0.38px;font-weight:700;color:#3d4043;">BILLING PREVIEW: OCTOBER</h4>
<div class="cpt" style="left:144px;background:#bdecd1"></div><div class="cpt" style="left:428px"></div><div class="cpt" style="left:712px"></div>
<span class="t" style="left:156.0px;top:969.7px;font-size:36px;letter-spacing:-1.40px;font-weight:700;">RPM</span>
<div style="position:absolute;left:260.0px;top:1006.0px;width:92.0px;height:42.0px;background:#2c88c3;border-radius:8px"></div>
<span class="t" style="left:269.2px;top:1013.0px;font-size:24px;letter-spacing:0.32px;color:#fff;">23 min</span>
<div style="position:absolute;left:468.0px;top:1060.0px;width:524.0px;height:4.0px;background:#aaa"></div>
<div style="position:absolute;left:144.0px;top:1054.0px;width:324.0px;height:16.0px;background:#2c88c3"></div>
<div class="tk" style="position:absolute;left:144.0px;top:1070.0px;width:4.0px;height:16.0px;"></div>
<div class="tk" style="position:absolute;left:215.7px;top:1070.0px;width:2.0px;height:12.0px;"></div>
<div class="tk" style="position:absolute;left:285.4px;top:1070.0px;width:4.0px;height:16.0px;"></div>
<div class="tk" style="position:absolute;left:357.1px;top:1070.0px;width:2.0px;height:12.0px;"></div>
<div class="tk" style="position:absolute;left:426.8px;top:1070.0px;width:4.0px;height:16.0px;"></div>
<div class="tk" style="position:absolute;left:498.5px;top:1070.0px;width:2.0px;height:12.0px;"></div>
<div class="tk" style="position:absolute;left:568.2px;top:1070.0px;width:4.0px;height:16.0px;"></div>
<div class="tk" style="position:absolute;left:639.9px;top:1070.0px;width:2.0px;height:12.0px;"></div>
<div class="tk" style="position:absolute;left:709.6px;top:1070.0px;width:4.0px;height:16.0px;"></div>
<div class="tk" style="position:absolute;left:781.3px;top:1070.0px;width:2.0px;height:12.0px;"></div>
<div class="tk" style="position:absolute;left:851.0px;top:1070.0px;width:4.0px;height:16.0px;"></div>
<div class="tk" style="position:absolute;left:922.7px;top:1070.0px;width:2.0px;height:12.0px;"></div>
<div class="tk" style="position:absolute;left:992.4px;top:1070.0px;width:4.0px;height:16.0px;"></div>
<span class="t" style="left:145.9px;top:1089.1px;font-size:15px;color:#ababab;">0</span>
<span class="t" style="left:279.5px;top:1089.1px;font-size:15px;letter-spacing:1.05px;color:#ababab;">10</span>
<span class="t" style="left:420.9px;top:1089.1px;font-size:15px;letter-spacing:1.05px;color:#ababab;">20</span>
<span class="t" style="left:562.3px;top:1089.1px;font-size:15px;letter-spacing:1.05px;color:#ababab;">30</span>
<span class="t" style="left:703.7px;top:1089.1px;font-size:15px;letter-spacing:1.05px;color:#ababab;">40</span>
<span class="t" style="left:845.1px;top:1089.1px;font-size:15px;letter-spacing:1.05px;color:#ababab;">50</span>
<span class="t" style="left:977.9px;top:1089.1px;font-size:15px;letter-spacing:1.05px;color:#ababab;">60</span>
<span class="t" style="left:159.5px;top:1116.5px;font-size:28px;letter-spacing:1.06px;">99457</span>
<span class="t" style="left:160.3px;top:1164.3px;font-size:24px;letter-spacing:0.40px;">20 min</span>
<svg class="ic" style="left:357.9px;top:1152.4px" width="50" height="50" viewBox="0 0 24 24"><path fill="#1f9d55" d="M9 16.17L4.83 12l-1.42 1.41L9 19 21 7l-1.41-1.41z"/></svg>
<span class="t" style="left:444.0px;top:1116.5px;font-size:28px;letter-spacing:0.56px;">99458 (1)</span>
<span class="t" style="left:444.0px;top:1164.3px;font-size:24px;letter-spacing:0.31px;">3 min</span>
<span class="t" style="left:601.6px;top:1164.3px;font-size:24px;letter-spacing:-0.09px;">(17 min)</span>
<span class="t" style="left:727.0px;top:1116.5px;font-size:28px;letter-spacing:0.56px;">99458 (2)</span>
<span class="t" style="left:727.0px;top:1164.3px;font-size:24px;letter-spacing:0.56px;">0 min</span>
<span class="t" style="left:885.0px;top:1164.3px;font-size:24px;letter-spacing:0.14px;">(20 min)</span>
<div style="position:absolute;left:144.0px;top:1270.0px;width:48.0px;height:16.0px;background:#2c88c3"></div>
<span class="t" style="left:212.0px;top:1262.3px;font-size:28px;letter-spacing:0.45px;">current note</span>
<a style="position:absolute;left:92.0px;top:1364.0px;width:220.0px;height:72.0px;background:#2c88c3;border-radius:8px;box-shadow:0 2px 4px -1px rgba(0,0,0,.2),0 4px 5px 0 rgba(0,0,0,.14),0 1px 10px 0 rgba(0,0,0,.12)"></a>
<span class="t" style="left:130.7px;top:1385.9px;font-size:28px;letter-spacing:-0.52px;color:#fff;-webkit-text-stroke:1.0px currentColor;">CONTINUE</span>
<a style="position:absolute;left:336.0px;top:1362.0px;width:220.0px;height:76.0px;border:4px solid #2c88c3;border-radius:8px;background:#fff"></a>
<span class="t" style="left:409.5px;top:1385.9px;font-size:28px;letter-spacing:-0.75px;color:#2c88c3;-webkit-text-stroke:1.0px currentColor;">BACK</span>
</section>
</body></html>
